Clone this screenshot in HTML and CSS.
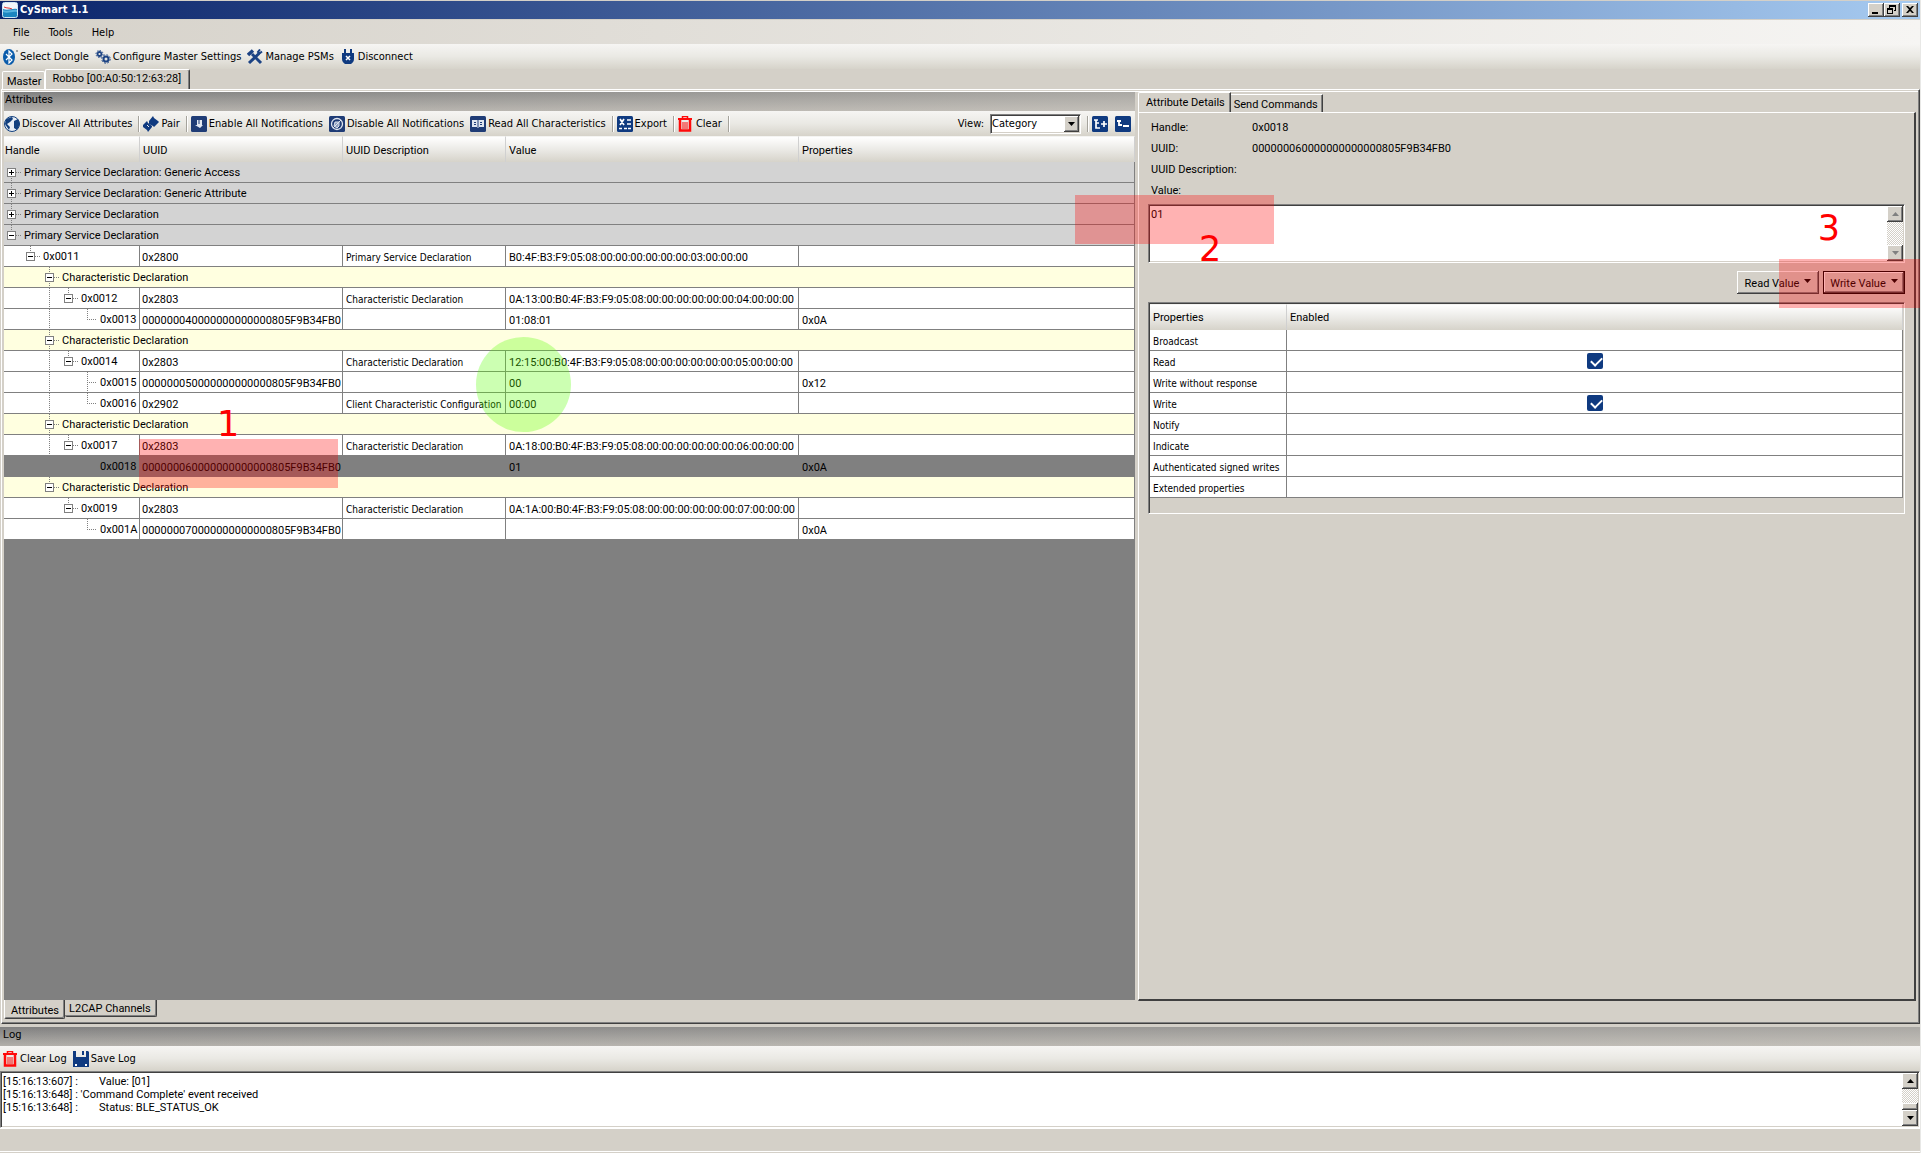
FILE: index.html
```html
<!DOCTYPE html>
<html lang="en">
<head>
<meta charset="utf-8">
<title>CySmart 1.1</title>
<link rel="stylesheet" href="styles.css">
</head>
<body>
<header class="titlebar">
  <svg class="app-icon" viewBox="0 0 16 16"><rect x="0.5" y="0.5" width="15" height="15" rx="2" fill="#1c86c0" stroke="#cfe6f5"/><path d="M1 1h14v6C10 6 6 9 1 7z" fill="#f2f6fa"/><path d="M2 5c3 1.500 5 .5 8 2" stroke="#d33" stroke-width="1" fill="none"/><path d="M1 8c5 2 9-1 14 0v2c-5-1-9 2-14 0z" fill="#58b4e0"/></svg>
  <h1 class="title">CySmart 1.1</h1>
  <div class="window-buttons">
    <button class="win-btn" aria-label="Minimize"><svg viewBox="0 0 16 14"><path d="M4 9h6v2H4z"/></svg></button>
    <button class="win-btn" aria-label="Restore"><svg viewBox="0 0 16 14"><path d="M5 2h7v6h-2V7h1V4H6v1H5zM3 5h6v6H3zM4 7v3h4V7z" fill-rule="evenodd"/></svg></button>
    <button class="win-btn win-close" aria-label="Close"><svg viewBox="0 0 16 14"><path d="M4 3h2l2 2 2-2h2L9 6.500l3 3.500h-2L8 8l-2 2H4l3-3.500z"/></svg></button>
  </div>
</header>
<nav class="menubar">
  <button class="menu-item">File</button>
  <button class="menu-item">Tools</button>
  <button class="menu-item">Help</button>
</nav>
<div class="toolbar main-tools">
  <button class="tool"><svg viewBox="0 0 16 16"><ellipse cx="7" cy="8" rx="6" ry="8" fill="#0a5cab"/><path d="M4 5l6 6-3 3V2l3 3-6 6" fill="none" stroke="#fff" stroke-width="1.200"/><circle cx="15" cy="2" r="1" fill="#888"/></svg>Select Dongle</button>
  <button class="tool"><svg viewBox="0 0 16 16"><g fill="none" stroke="#1c4384"><circle cx="4.500" cy="5" r="2" stroke-width="1.800"/><circle cx="4.500" cy="5" r="3.500" stroke-dasharray="1.400 1.300"/><circle cx="11" cy="10" r="2.500" stroke-width="2"/><circle cx="11" cy="10" r="4.200" stroke-dasharray="1.800 1.500"/></g></svg>Configure Master Settings</button>
  <button class="tool"><svg viewBox="0 0 16 16"><g stroke="#1c4384" fill="none"><path d="M2 14L12 4.500" stroke-width="3"/><path d="M5 5l9 9" stroke-width="3"/><path d="M15 2.500l-2.500 2-1.500-1.500 2-2.500" stroke-width="2"/><path d="M1 6l5-4.500" stroke-width="3.500"/></g></svg>Manage PSMs</button>
  <button class="tool"><svg viewBox="0 0 16 16"><path d="M4 0h2v4h4V0h2v4h2v6c0 3-2 4-3 5H5c-1-1-3-2-3-5V4h2z" fill="#0f3a80"/><path d="M6 7l4 4M10 7l-4 4" stroke="#fff" stroke-width="1.500"/></svg>Disconnect</button>
</div>
<div class="tabs top-tabs">
  <button class="tab">Master</button>
  <button class="tab selected">Robbo [00:A0:50:12:63:28]</button>
</div>
<main class="workspace">
  <section class="left-pane">
    <h2 class="caption">Attributes</h2>
    <div class="toolbar attr-tools">
      <button class="tool"><svg viewBox="0 0 16 16"><circle cx="8" cy="8" r="7.500" fill="#e8eef5" stroke="#12407f"/><path d="M8 1L2 3 1 8l4 6 1-3-3-3 3-2 3-3zM10 5l4-2 2 5-3 6-3-2V9z" fill="#12407f"/></svg>Discover All Attributes</button>
      <i class="sep"></i>
      <button class="tool"><svg viewBox="0 0 16 16" fill="#0f3a80"><path d="M6 5l4-5 1 2 4 3 1 1-5 5-1-1-4-2z"/><path d="M0 9l4-4 1 2 4 3v1l-4 5-1-2-4-3z"/><path d="M4 9l2 2" stroke="#f0efec"/></svg>Pair</button>
      <i class="sep"></i>
      <button class="tool"><svg viewBox="0 0 16 16"><rect width="16" height="16" rx="1.500" fill="#1f3c76"/><path d="M6 4h5v5h1L9 12 4 9h2z" fill="#e4e9f2"/><path d="M8 4v4" stroke="#1f3c76"/></svg>Enable All Notifications</button>
      <button class="tool"><svg viewBox="0 0 16 16"><rect width="16" height="16" rx="1.500" fill="#1f3c76"/><circle cx="8" cy="8" r="5.500" fill="none" stroke="#dfe5ef" stroke-width="1.300"/><path d="M6 6h4v4L8 12 5 10zM4 12l8-8" fill="#8fa0c0" stroke="#dfe5ef"/></svg>Disable All Notifications</button>
      <button class="tool"><svg viewBox="0 0 16 16"><rect width="16" height="16" rx="1.500" fill="#1f3c76"/><path d="M2 4h5l1 1 1-1h5v7H9l-1 1-1-1H2z" fill="#dfe5ef"/><path d="M8 5v6M4 6.500h2M4 8.500h2M10 6.500h2M10 8.500h2" stroke="#1f3c76"/></svg>Read All Characteristics</button>
      <i class="sep"></i>
      <button class="tool"><svg viewBox="0 0 16 16"><rect width="16" height="16" rx="1.500" fill="#0f3a80"/><path d="M3 3l4 6M7 3L3 9M10 4h4M10 8h4M2 12.500h3M7 12.500h3M11 12.500h3" stroke="#fff" stroke-width="1.700"/></svg>Export</button>
      <i class="sep"></i>
      <button class="tool"><svg viewBox="0 0 16 16" fill="none" stroke="#ff0a0a"><path d="M0 3h14" stroke-width="2"/><path d="M4.500 2V.5h5V2" stroke-width="1.500"/><path d="M2 4v10.500h10V4" stroke-width="2.500"/><path d="M5 6v7M7 6v7M9 6v7"/></svg>Clear</button>
      <i class="sep"></i>
      <label class="view-label" for="view">View:</label>
      <span class="combo"><select id="view"><option>Category</option></select><span class="combo-arrow"><svg viewBox="0 0 7 4"><path d="M0 0h7L3.500 4z"/></svg></span></span>
      <i class="sep"></i>
      <button class="tool icon-only" aria-label="Expand all"><svg viewBox="0 0 16 16"><rect width="16" height="16" rx="1.500" fill="#0f3a80"/><path d="M2 4h4M4 4v8h4M4 7h3M9 8h6M12 5v6" fill="none" stroke="#fff" stroke-width="1.700"/></svg></button>
      <button class="tool icon-only" aria-label="Collapse all"><svg viewBox="0 0 16 16"><rect width="16" height="16" rx="1.500" fill="#0f3a80"/><path d="M2 5h4M4 5v4h3M8 10h6" fill="none" stroke="#fff" stroke-width="1.800"/></svg></button>
    </div>
    <div class="grid-area">
      <table class="grid attrs">
        <colgroup><col class="c-handle"><col class="c-uuid"><col class="c-desc"><col class="c-value"><col></colgroup>
        <thead><tr><th>Handle</th><th>UUID</th><th>UUID Description</th><th>Value</th><th>Properties</th></tr></thead>
        <tbody>
          <tr class="service"><td colspan="5"><div class="node"><span class="branch down"><button class="toggle plus" aria-label="Expand"></button></span>Primary Service Declaration: Generic Access</div></td></tr>
          <tr class="service"><td colspan="5"><div class="node"><span class="branch up down"><button class="toggle plus" aria-label="Expand"></button></span>Primary Service Declaration: Generic Attribute</div></td></tr>
          <tr class="service"><td colspan="5"><div class="node"><span class="branch up down"><button class="toggle plus" aria-label="Expand"></button></span>Primary Service Declaration</div></td></tr>
          <tr class="service"><td colspan="5"><div class="node"><span class="branch up"><button class="toggle" aria-label="Collapse"></button></span>Primary Service Declaration</div></td></tr>
          <tr><td><div class="node"><span class="indent"></span><span class="branch up"><button class="toggle" aria-label="Collapse"></button></span>0x0011</div></td><td>0x2800</td><td class="name">Primary Service Declaration</td><td>B0:4F:B3:F9:05:08:00:00:00:00:00:00:03:00:00:00</td><td></td></tr>
          <tr class="characteristic"><td colspan="5"><div class="node"><span class="indent"></span><span class="indent"></span><span class="branch up down"><button class="toggle" aria-label="Collapse"></button></span>Characteristic Declaration</div></td></tr>
          <tr><td><div class="node"><span class="indent"></span><span class="indent"></span><span class="indent line"></span><span class="branch up"><button class="toggle" aria-label="Collapse"></button></span>0x0012</div></td><td>0x2803</td><td class="name">Characteristic Declaration</td><td>0A:13:00:B0:4F:B3:F9:05:08:00:00:00:00:00:00:04:00:00:00</td><td></td></tr>
          <tr><td><div class="node"><span class="indent"></span><span class="indent"></span><span class="indent line"></span><span class="indent"></span><span class="branch leaf up"></span>0x0013</div></td><td>000000040000000000000805F9B34FB0</td><td></td><td>01:08:01</td><td>0x0A</td></tr>
          <tr class="characteristic"><td colspan="5"><div class="node"><span class="indent"></span><span class="indent"></span><span class="branch up down"><button class="toggle" aria-label="Collapse"></button></span>Characteristic Declaration</div></td></tr>
          <tr><td><div class="node"><span class="indent"></span><span class="indent"></span><span class="indent line"></span><span class="branch up"><button class="toggle" aria-label="Collapse"></button></span>0x0014</div></td><td>0x2803</td><td class="name">Characteristic Declaration</td><td>12:15:00:B0:4F:B3:F9:05:08:00:00:00:00:00:00:05:00:00:00</td><td></td></tr>
          <tr><td><div class="node"><span class="indent"></span><span class="indent"></span><span class="indent line"></span><span class="indent"></span><span class="branch leaf up down"></span>0x0015</div></td><td>000000050000000000000805F9B34FB0</td><td></td><td>00</td><td>0x12</td></tr>
          <tr><td><div class="node"><span class="indent"></span><span class="indent"></span><span class="indent line"></span><span class="indent"></span><span class="branch leaf up"></span>0x0016</div></td><td>0x2902</td><td class="name">Client Characteristic Configuration</td><td>00:00</td><td></td></tr>
          <tr class="characteristic"><td colspan="5"><div class="node"><span class="indent"></span><span class="indent"></span><span class="branch up down"><button class="toggle" aria-label="Collapse"></button></span>Characteristic Declaration</div></td></tr>
          <tr><td><div class="node"><span class="indent"></span><span class="indent"></span><span class="indent line"></span><span class="branch up"><button class="toggle" aria-label="Collapse"></button></span>0x0017</div></td><td>0x2803</td><td class="name">Characteristic Declaration</td><td>0A:18:00:B0:4F:B3:F9:05:08:00:00:00:00:00:00:06:00:00:00</td><td></td></tr>
          <tr class="current"><td><div class="node"><span class="indent"></span><span class="indent"></span><span class="indent"></span><span class="indent"></span><span class="branch none"></span>0x0018</div></td><td>000000060000000000000805F9B34FB0</td><td></td><td>01</td><td>0x0A</td></tr>
          <tr class="characteristic"><td colspan="5"><div class="node"><span class="indent"></span><span class="indent"></span><span class="branch up"><button class="toggle" aria-label="Collapse"></button></span>Characteristic Declaration</div></td></tr>
          <tr><td><div class="node"><span class="indent"></span><span class="indent"></span><span class="indent"></span><span class="branch up"><button class="toggle" aria-label="Collapse"></button></span>0x0019</div></td><td>0x2803</td><td class="name">Characteristic Declaration</td><td>0A:1A:00:B0:4F:B3:F9:05:08:00:00:00:00:00:00:07:00:00:00</td><td></td></tr>
          <tr><td><div class="node"><span class="indent"></span><span class="indent"></span><span class="indent"></span><span class="indent"></span><span class="branch leaf up"></span>0x001A</div></td><td>000000070000000000000805F9B34FB0</td><td></td><td></td><td>0x0A</td></tr>
        </tbody>
      </table>
    </div>
    <div class="tabs bottom-tabs">
      <button class="tab selected">Attributes</button>
      <button class="tab">L2CAP Channels</button>
    </div>
  </section>
  <section class="right-pane">
    <div class="tabs detail-tabs">
      <button class="tab selected">Attribute Details</button>
      <button class="tab">Send Commands</button>
    </div>
    <div class="details">
      <dl class="facts">
        <dt>Handle:</dt><dd>0x0018</dd>
        <dt>UUID:</dt><dd>000000060000000000000805F9B34FB0</dd>
        <dt>UUID Description:</dt><dd></dd>
      </dl>
      <label class="value-label" for="value">Value:</label>
      <div class="sunken value-box">
        <textarea id="value">01</textarea>
        <div class="scrollbar disabled"><button aria-label="Scroll up"><svg viewBox="0 0 7 4"><path d="M0 4h7L3.500 0z"/></svg></button><span class="track"></span><button aria-label="Scroll down"><svg viewBox="0 0 7 4"><path d="M0 0h7L3.500 4z"/></svg></button></div>
      </div>
      <div class="actions">
        <button class="push">Read Value<svg viewBox="0 0 7 4"><path d="M0 0h7L3.500 4z"/></svg></button>
        <button class="push default">Write Value<svg viewBox="0 0 7 4"><path d="M0 0h7L3.500 4z"/></svg></button>
      </div>
      <div class="sunken props-box">
        <table class="grid props">
          <colgroup><col class="c-prop"><col></colgroup>
          <thead><tr><th>Properties</th><th>Enabled</th></tr></thead>
          <tbody>
            <tr><td class="name">Broadcast</td><td></td></tr>
            <tr><td class="name"><label for="p-read">Read</label></td><td><input type="checkbox" id="p-read" checked></td></tr>
            <tr><td class="name">Write without response</td><td></td></tr>
            <tr><td class="name"><label for="p-write">Write</label></td><td><input type="checkbox" id="p-write" checked></td></tr>
            <tr><td class="name">Notify</td><td></td></tr>
            <tr><td class="name">Indicate</td><td></td></tr>
            <tr><td class="name">Authenticated signed writes</td><td></td></tr>
            <tr><td class="name">Extended properties</td><td></td></tr>
          </tbody>
        </table>
      </div>
    </div>
  </section>
</main>
<section class="log">
  <h2 class="caption">Log</h2>
  <div class="toolbar log-tools">
    <button class="tool"><svg viewBox="0 0 16 16" fill="none" stroke="#ff0a0a"><path d="M1 3h14" stroke-width="2"/><path d="M5.500 2V.5h5V2" stroke-width="1.500"/><path d="M3 4v10.500h10V4" stroke-width="2.500"/><path d="M6 6v7M8 6v7M10 6v7"/></svg>Clear Log</button>
    <button class="tool"><svg viewBox="0 0 16 16"><path d="M0 0h3v6h10V0h2l1 1v15H0z" fill="#0f3a80"/><path d="M9 0h2v4H9z" fill="#0f3a80"/><path d="M2 13h2v2H2zM12 13h2v2h-2z" fill="#fff"/></svg>Save Log</button>
  </div>
  <div class="sunken log-box">
    <textarea readonly aria-label="Log">[15:16:13:607] :&#9;Value: [01]
[15:16:13:648] : 'Command Complete' event received
[15:16:13:648] :&#9;Status: BLE_STATUS_OK</textarea>
    <div class="scrollbar"><button aria-label="Scroll up"><svg viewBox="0 0 7 4"><path d="M0 4h7L3.500 0z"/></svg></button><span class="track"></span><span class="thumb"></span><button aria-label="Scroll down"><svg viewBox="0 0 7 4"><path d="M0 0h7L3.500 4z"/></svg></button></div>
  </div>
</section>
<footer class="statusbar"></footer>
<div class="mark mark-1"></div><div class="step step-1">1</div>
<div class="mark mark-2"></div><div class="step step-2">2</div>
<div class="mark mark-3"></div><div class="step step-3">3</div>
<div class="spot"></div>
</body>
</html>
```

FILE: styles.css
```css
* { box-sizing: border-box; }
:root {
  --face: #d4d0c8;
  --dark: #404040;
  --mid: #808080;
  --strip: linear-gradient(#f6f5f3, #eae9e4 50%, #d6d3ca);
  --ui: "DejaVu Sans Condensed", "DejaVu Sans", sans-serif;
  --raised: inset -1px -1px #404040, inset 1px 1px #fff, inset -2px -2px #808080;
}
body {
  margin: 0;
  min-height: 100vh;
  position: relative;
  display: flex;
  flex-direction: column;
  background: var(--face);
  border-right: 1px solid #e8e8e6;
  font: 11px/13px Roboto, "Liberation Sans", sans-serif;
  color: #000;
}
button, select, textarea, input { font: inherit; color: inherit; margin: 0; padding: 0; border: 0; background: none; }
h1, h2, dl, dd { margin: 0; font: inherit; }
svg { display: block; flex: none; }

.titlebar {
  display: flex;
  align-items: center;
  height: 20px;
  padding: 0 2px;
  border: solid var(--face);
  border-width: 1px 0;
  background: linear-gradient(90deg, #0a246a, #a6caf0);
}
.app-icon { width: 16px; height: 16px; margin-right: 2px; }
.title { font: bold 11px/16px var(--ui); color: #fff; flex: 1; }
.window-buttons { display: flex; }
.win-btn { width: 16px; height: 14px; background: var(--face); box-shadow: var(--raised); }
.win-close { margin-left: 2px; }

.menubar {
  display: flex;
  height: 24px;
  padding-left: 5px;
  background: linear-gradient(90deg, #d6d2ca, #f6f5f3);
  font-family: var(--ui);
}
.menu-item { padding: 0 8px; margin-right: 3px; }

.toolbar {
  display: flex;
  align-items: center;
  height: 25px;
  background: var(--strip);
  font-family: var(--ui);
}
.tool { display: flex; align-items: center; gap: 2px; margin-right: 6px; white-space: nowrap; }
.tool svg { width: 16px; height: 16px; }
.sep { width: 2px; height: 16px; border-left: 1px solid #a5a39c; border-right: 1px solid #fff; margin-right: 3px; }
.main-tools { padding-left: 2px; }
.view-label { margin-left: auto; margin-right: 6px; }
.icon-only { margin-right: 7px; }
.icon-only:last-child { margin-right: 4px; }

.combo {
  display: flex;
  width: 91px;
  height: 20px;
  margin-right: 6px;
  padding: 1px;
  background: #fff;
  border: 1px solid;
  border-color: var(--mid) #fff #fff var(--mid);
  box-shadow: inset 1px 1px var(--dark), inset -1px -1px var(--face);
}
.combo select { appearance: none; flex: 1; min-width: 0; }
.combo-arrow { width: 15px; background: var(--face); box-shadow: var(--raised); display: grid; place-items: center; }
.combo-arrow svg { width: 7px; height: 4px; }

.tabs { display: flex; }
.tab { white-space: nowrap; }
.top-tabs { height: 20px; align-items: flex-end; padding-left: 2px; }
.top-tabs .tab {
  height: 18px;
  padding: 1px 3px 0 4px;
  border: 1px solid #fff;
  border-bottom: 0;
  border-radius: 2px 2px 0 0;
}
.top-tabs .selected { height: 20px; padding: 0 8px 2px 6px; border-right-color: var(--dark); box-shadow: inset -1px 0 var(--mid); }

.workspace {
  flex: 1;
  display: grid;
  grid-template-columns: 1131fr 778fr;
  column-gap: 3px;
  padding: 2px 3px 2px 2px;
  margin: 0 0 3px 1px;
  border: 1px solid;
  border-color: #fff var(--dark) var(--dark) #fff;
  box-shadow: inset -1px -1px var(--mid), inset 0 1px var(--face), inset 0 2px #fff;
}
.left-pane { display: flex; flex-direction: column; min-width: 0; }
.caption {
  height: 19px;
  padding: 1px 1px;
  background: linear-gradient(90deg, transparent, rgba(212, 208, 200, .5)), linear-gradient(#808080, #b2afaa);
}
.grid-area { flex: 1; background: var(--mid); }

.grid { width: 100%; border-collapse: separate; border-spacing: 0; table-layout: fixed; background: #fff; }
.c-handle { width: 136px; }
.c-uuid { width: 203px; }
.c-desc { width: 163px; }
.c-value { width: 293px; }
.grid th {
  height: 26px;
  padding: 1px 3px 0;
  text-align: left;
  font-weight: normal;
  border-right: 1px solid #d0d0d0;
  border-top: 1px solid #f4f4f2;
  background: linear-gradient(#fff, #ebeae6 50%, #d6d3ca);
}
.grid th:first-child { padding-left: 1px; }
.grid td {
  height: 21px;
  padding: 2px 3px 0;
  border: solid var(--mid);
  border-width: 0 1px 1px 0;
  white-space: nowrap;
}
.grid td:first-child { padding: 0; }
.attrs td:nth-child(2) { padding-left: 2px; }
.grid .name { font-family: var(--ui); font-size: 10px; }
.service td { background: #d3d3d3; }
.characteristic td { background: #ffffe0; }
.current td { background: var(--mid); }

.node { display: flex; height: 20px; line-height: 22px; }
.indent, .branch { flex: none; width: 19px; height: 20px; position: relative; }
.indent.line, .branch { --dots: repeating-linear-gradient(#808080 0 1px, transparent 1px 2px); }
.indent.line { background: var(--dots) 7px 0 / 1px 20px no-repeat; }
.branch { margin-right: 1px; display: flex; align-items: center; padding-left: 3px; }
.branch::before, .branch::after { content: ""; position: absolute; }
.branch::before { left: 7px; width: 1px; top: 10px; bottom: 10px; background: var(--dots); }
.branch.up::before { top: 0; }
.branch.down::before { bottom: 0; }
.branch::after { left: 12px; width: 6px; top: 10px; height: 1px; background: repeating-linear-gradient(90deg, #808080 0 1px, transparent 1px 2px); }
.branch.leaf::after { left: 7px; width: 10px; }
.branch.none::after { content: none; }
.toggle {
  position: relative;
  z-index: 1;
  width: 9px;
  height: 9px;
  border: 1px solid var(--mid);
  background: linear-gradient(#000, #000) 1px 3px / 5px 1px no-repeat #fff;
}
.toggle.plus {
  background: linear-gradient(#000, #000) 1px 3px / 5px 1px no-repeat,
    linear-gradient(#000, #000) 3px 1px / 1px 5px no-repeat #fff;
}

.bottom-tabs { height: 21px; align-items: flex-start; }
.bottom-tabs .tab { height: 17px; padding: 1px 5px 1px 4px; border: solid var(--dark); border-width: 0 1px 1px 0; border-radius: 0 0 2px 2px; box-shadow: inset -1px -1px var(--mid); }
.bottom-tabs .selected { height: 19px; padding: 2px 5px 0 6px; border-left: 1px solid #fff; }

.right-pane { display: flex; flex-direction: column; min-width: 0; padding-bottom: 20px; }
.detail-tabs { height: 20px; align-items: flex-end; }
.detail-tabs .tab { height: 18px; padding: 1px 4px 0 3px; border: solid #fff; border-width: 1px 1px 0 0; border-right-color: var(--dark); box-shadow: inset -1px 0 var(--mid); }
.detail-tabs .selected { height: 20px; padding: 0 5px 1px 7px; border-left-width: 1px; border-radius: 2px 0 0 0; }
.details {
  flex: 1;
  padding: 8px 9px 8px;
  border: solid;
  border-width: 1px 2px 2px 1px;
  border-color: #fff var(--dark) var(--dark) #fff;
}
.facts { display: grid; grid-template-columns: 101px 1fr; grid-auto-rows: 21px; padding-left: 3px; }
.value-label { display: block; height: 20px; padding-left: 3px; }
.sunken {
  border: 1px solid;
  border-color: var(--mid) #fff #fff var(--mid);
  box-shadow: inset 1px 1px var(--dark), inset -1px -1px var(--face);
  padding: 1px;
}
.value-box { display: flex; height: 59px; background: #fff; }
.sunken textarea { flex: 1; min-width: 0; padding: 2px 1px 0; resize: none; outline: 0; overflow: hidden; white-space: pre; }
.scrollbar { width: 16px; display: flex; flex-direction: column; }
.scrollbar button { height: 16px; background: var(--face); box-shadow: var(--raised); display: grid; place-items: center; }
.scrollbar svg { width: 7px; height: 4px; }
.disabled svg { fill: var(--mid); }
.track { flex: 1; background: repeating-conic-gradient(#fff 0 25%, #d4d0c8 0 50%) 0 0 / 2px 2px; }
.thumb { height: 7px; background: var(--face); box-shadow: var(--raised); }
.actions { display: flex; justify-content: flex-end; gap: 4px; padding: 8px 0; }
.push { display: flex; align-items: center; justify-content: center; gap: 5px; width: 82px; height: 23px; padding-top: 1px; background: var(--face); box-shadow: var(--raised); }
.push svg { width: 7px; height: 4px; margin-bottom: 4px; }
.default { border: 1px solid #000; }
.props-box { height: 212px; }
.c-prop { width: 137px; }
.grid.props th { padding: 0 3px; }
.grid.props td:first-child { padding: 2px 3px 0; }
.grid.props td:last-child { padding: 0; text-align: center; }
.props input {
  appearance: none;
  display: block;
  width: 16px;
  height: 16px;
  margin: 0 auto;
  border-radius: 2px;
  background: #0f3a80;
}
.props input::after {
  content: "";
  display: block;
  width: 9px;
  height: 5px;
  margin: 4px;
  border: solid #fff;
  border-width: 0 0 2px 2px;
  rotate: -45deg;
}

.log .caption { padding-left: 3px; }
.log-tools { padding-left: 2px; }
.log-box { display: flex; height: 57px; background: #fff; }
.log-box textarea { tab-size: 32px; line-height: 13px; }
.statusbar { height: 25px; border-top: 1px solid #fff; box-shadow: inset 0 -1px var(--face), inset 0 -2px #fff; }

/* Tutorial marks laid over the window */
.mark, .step, .spot { position: absolute; pointer-events: none; }
.mark { width: 199px; height: 49px; background: rgba(255, 0, 0, .3); }
.step { font: 35px/35px "DejaVu Sans", sans-serif; color: #f00; }
.mark-1 { left: 139px; top: 439px; }
.mark-2 { left: 1075px; top: 195px; }
.mark-3 { right: -1px; top: 259px; width: 142px; }
.step-1 { left: 217px; top: 407px; }
.step-2 { left: 1199px; top: 232px; }
.step-3 { right: 80px; top: 211px; }
.spot { left: 476px; top: 337px; width: 95px; height: 95px; border-radius: 50%; background: rgba(85, 255, 0, .3); }
```
